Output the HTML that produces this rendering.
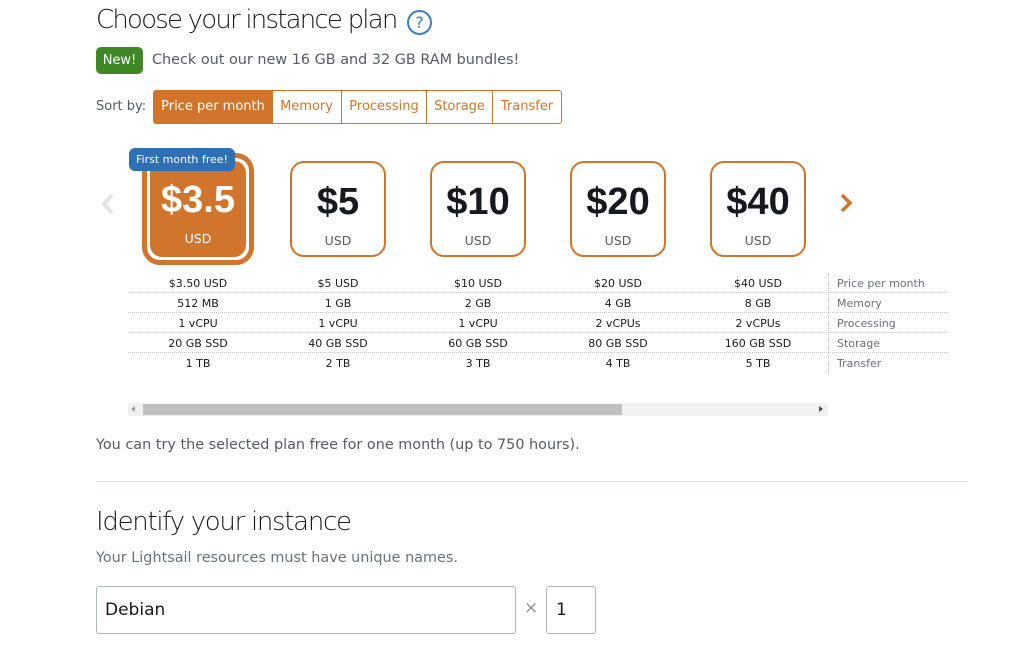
<!DOCTYPE html>
<html><head><meta charset="utf-8"><style>
*{margin:0;padding:0;box-sizing:border-box}
body{width:1022px;height:650px;background:#fff;font-family:"DejaVu Sans","Liberation Sans",sans-serif;position:relative;overflow:hidden;color:#16191f}
.a{position:absolute}
h1{position:absolute;font-weight:300;font-size:26px;color:#16191f;font-family:"DejaVu Sans","Liberation Sans",sans-serif;letter-spacing:-1.8px;white-space:nowrap}
.card{position:absolute;top:161px;width:96px;height:96px;border:2px solid #d0752b;border-radius:14px;text-align:center}
.card .p{font-family:"Liberation Sans",sans-serif;font-size:38px;font-weight:bold;margin-top:17px;line-height:44px}
.card .u{font-size:12.5px;color:#545b64;margin-top:9px}
.row{position:absolute;left:128px;width:819px;height:20px;font-size:11px;border-bottom:1px dotted #c8c8c8}
.row span{position:absolute;width:140px;text-align:center;top:4px}
.row .l{left:709px;width:auto;text-align:left;color:#687078}
.sb{position:absolute;top:90px;height:34px;border:1px solid #d0752b;font-size:13px;color:#d0752b;line-height:32px;text-align:center}
</style></head><body>
<h1 style="left:96px;top:5px">Choose your instance plan</h1>
<div class="a" style="left:407px;top:10px;width:25px;height:25px;border:2px solid #3b7ec2;border-radius:50%;color:#3b7ec2;font-size:16px;text-align:center;line-height:21px;background:#fff">?</div>
<div class="a" style="left:96px;top:47px;width:47px;height:27px;background:#3f8624;border-radius:5px;color:#fff;font-size:13px;text-align:center;line-height:27px">New!</div>
<div class="a" style="left:152px;top:52px;font-size:14.4px;color:#545b64">Check out our new 16 GB and 32 GB RAM bundles!</div>
<div class="a" style="left:96px;top:99px;font-size:13px;color:#545b64">Sort by:</div>
<div class="sb" style="left:153px;width:120px;background:#d0752b;color:#fff;border-radius:3px 0 0 3px">Price per month</div>
<div class="sb" style="left:272px;width:70px;border-left:none">Memory</div>
<div class="sb" style="left:341px;width:86px">Processing</div>
<div class="sb" style="left:426px;width:67px">Storage</div>
<div class="sb" style="left:492px;width:70px;border-radius:0 3px 3px 0">Transfer</div>
<svg class="a" style="left:98px;top:192px" width="20" height="24"><path d="M14 3 L6 12 L14 21" stroke="#e3e3e3" stroke-width="4" fill="none"/></svg>
<svg class="a" style="left:837px;top:191px" width="20" height="24"><path d="M5 4 L13 12 L5 20" stroke="#d0752b" stroke-width="3.5" fill="none"/></svg>
<div class="a" style="left:142px;top:153px;width:112px;height:112px;border:5px solid #d0752b;border-radius:18px;padding:3px">
<div style="width:96px;height:96px;background:#d0752b;border-radius:12px;color:#fff;text-align:center">
<div style="font-family:'Liberation Sans',sans-serif;font-size:38px;font-weight:bold;padding-top:17px;line-height:44px">$3.5</div>
<div style="font-size:12.5px;margin-top:9px">USD</div></div></div>
<div class="a" style="left:129px;top:148px;width:106px;height:23px;background:#2e6fb5;border-radius:6px;color:#fff;font-size:11px;text-align:center;line-height:23px">First month free!</div>
<div class="card" style="left:290px"><div class="p">$5</div><div class="u">USD</div></div>
<div class="card" style="left:430px"><div class="p">$10</div><div class="u">USD</div></div>
<div class="card" style="left:570px"><div class="p">$20</div><div class="u">USD</div></div>
<div class="card" style="left:710px"><div class="p">$40</div><div class="u">USD</div></div>
<div class="row" style="top:273px"><span style="left:0">$3.50 USD</span><span style="left:140px">$5 USD</span><span style="left:280px">$10 USD</span><span style="left:420px">$20 USD</span><span style="left:560px">$40 USD</span><span class="l">Price per month</span></div>
<div class="row" style="top:293px"><span style="left:0">512 MB</span><span style="left:140px">1 GB</span><span style="left:280px">2 GB</span><span style="left:420px">4 GB</span><span style="left:560px">8 GB</span><span class="l">Memory</span></div>
<div class="row" style="top:313px"><span style="left:0">1 vCPU</span><span style="left:140px">1 vCPU</span><span style="left:280px">1 vCPU</span><span style="left:420px">2 vCPUs</span><span style="left:560px">2 vCPUs</span><span class="l">Processing</span></div>
<div class="row" style="top:333px"><span style="left:0">20 GB SSD</span><span style="left:140px">40 GB SSD</span><span style="left:280px">60 GB SSD</span><span style="left:420px">80 GB SSD</span><span style="left:560px">160 GB SSD</span><span class="l">Storage</span></div>
<div class="row" style="top:353px;border-bottom:none"><span style="left:0">1 TB</span><span style="left:140px">2 TB</span><span style="left:280px">3 TB</span><span style="left:420px">4 TB</span><span style="left:560px">5 TB</span><span class="l">Transfer</span></div>
<div class="a" style="left:828px;top:273px;height:100px;border-left:1px dotted #c8c8c8"></div>
<div class="a" style="left:128px;top:403px;width:700px;height:13px;background:#f1f1f1"></div>
<div class="a" style="left:143px;top:404px;width:479px;height:11px;background:#c1c1c1"></div>
<div class="a" style="left:131px;top:406px;border:3px solid transparent;border-right:4px solid #a0a0a0;border-left:none;height:0"></div>
<div class="a" style="left:819px;top:406px;border:3px solid transparent;border-left:4px solid #505050;border-right:none;height:0"></div>
<div class="a" style="left:96px;top:437px;font-size:14.4px;color:#545b64">You can try the selected plan free for one month (up to 750 hours).</div>
<div class="a" style="left:96px;top:481px;width:872px;border-top:1px solid #d5dbdb"></div>
<h1 style="left:96px;top:507px;letter-spacing:-1.3px">Identify your instance</h1>
<div class="a" style="left:96px;top:550px;font-size:14.4px;color:#687078">Your Lightsail resources must have unique names.</div>
<div class="a" style="left:96px;top:586px;width:420px;height:48px;border:1px solid #aab7b8;border-radius:3px;font-size:17px;padding:13px 0 0 8px">Debian</div>
<div class="a" style="left:524px;top:598px;font-size:17px;color:#879596">×</div>
<div class="a" style="left:546px;top:586px;width:50px;height:48px;border:1px solid #aab7b8;border-radius:3px;font-size:17px;padding:13px 0 0 9px">1</div>
</body></html>
